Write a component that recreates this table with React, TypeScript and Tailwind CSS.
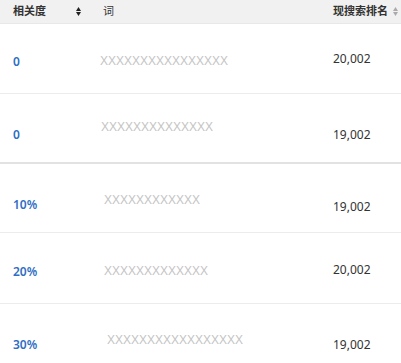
import React from 'react';

type Row = {
  label: string;
  word: string;
  rank: string;
  h: string;
  border: string;
  labelPt: string;
  wordPt: string;
  rankPt: string;
  wordPl: string;
};

const rows: Row[] = [
  { label: '0', word: 'XXXXXXXXXXXXXXXX', rank: '20,002', h: 'h-[70px]', border: 'border-b border-[#ececec]', labelPt: 'pt-[30px]', wordPt: 'pt-[29px]', rankPt: 'pt-[27px]', wordPl: 'pl-0' },
  { label: '0', word: 'XXXXXXXXXXXXXX', rank: '19,002', h: 'h-[70px]', border: 'border-b-2 border-[#e2e2e2]', labelPt: 'pt-[33px]', wordPt: 'pt-[25px]', rankPt: 'pt-[33px]', wordPl: 'pl-[1px]' },
  { label: '10%', word: 'XXXXXXXXXXXX', rank: '19,002', h: 'h-[69px]', border: 'border-b border-[#ececec]', labelPt: 'pt-[33px]', wordPt: 'pt-[28px]', rankPt: 'pt-[35px]', wordPl: 'pl-[4px]' },
  { label: '20%', word: 'XXXXXXXXXXXXX', rank: '20,002', h: 'h-[71px]', border: 'border-b border-[#ececec]', labelPt: 'pt-[31px]', wordPt: 'pt-[30px]', rankPt: 'pt-[29px]', wordPl: 'pl-[4px]' },
  { label: '30%', word: 'XXXXXXXXXXXXXXXXX', rank: '19,002', h: 'h-[70px]', border: '', labelPt: 'pt-[33px]', wordPt: 'pt-[28px]', rankPt: 'pt-[33px]', wordPl: 'pl-[7px]' },
];

function SortIcon({ className }: { className: string }) {
  return (
    <svg width="5" height="9" viewBox="0 0 5 9" className={className}>
      <path d="M2.5 0 L5 4 L0 4 Z" fill="currentColor" />
      <path d="M2.5 9 L5 5 L0 5 Z" fill="currentColor" />
    </svg>
  );
}

export default function App() {
  return (
    <div className="w-[401px] h-[363px] overflow-hidden bg-white font-['Noto_Sans','Noto_Sans_CJK_SC',sans-serif]">
      <div className="h-[24px] flex items-center bg-[#f1f1f1] text-[11px] font-bold text-[#333] border-b border-[#e8e8e8]">
        <div className="w-[100px] flex items-center pl-[13px]">
          <span>相关度</span>
          <SortIcon className="ml-[30px] text-[#222]" />
        </div>
        <div className="flex-1 pl-[3px] font-normal">词</div>
        <div className="w-[68px] flex items-center">
          <span>现搜索排名</span>
          <SortIcon className="ml-[5px] text-[#aaa]" />
        </div>
      </div>
      {rows.map((r, i) => (
        <div key={i} className={`flex items-start ${r.h} ${r.border}`}>
          <div className={`w-[100px] pl-[13px] ${r.labelPt} text-[12px] leading-[16px] font-semibold text-[#2f6ec4]`}>
            {r.label}
          </div>
          <div className={`flex-1 ${r.wordPl} ${r.wordPt} text-[12px] leading-[16px] text-[#c4c4c4] font-['Liberation_Sans',sans-serif]`}>
            {r.word}
          </div>
          <div className={`w-[68px] ${r.rankPt} text-[12px] leading-[16px] text-[#333]`}>{r.rank}</div>
        </div>
      ))}
    </div>
  );
}
